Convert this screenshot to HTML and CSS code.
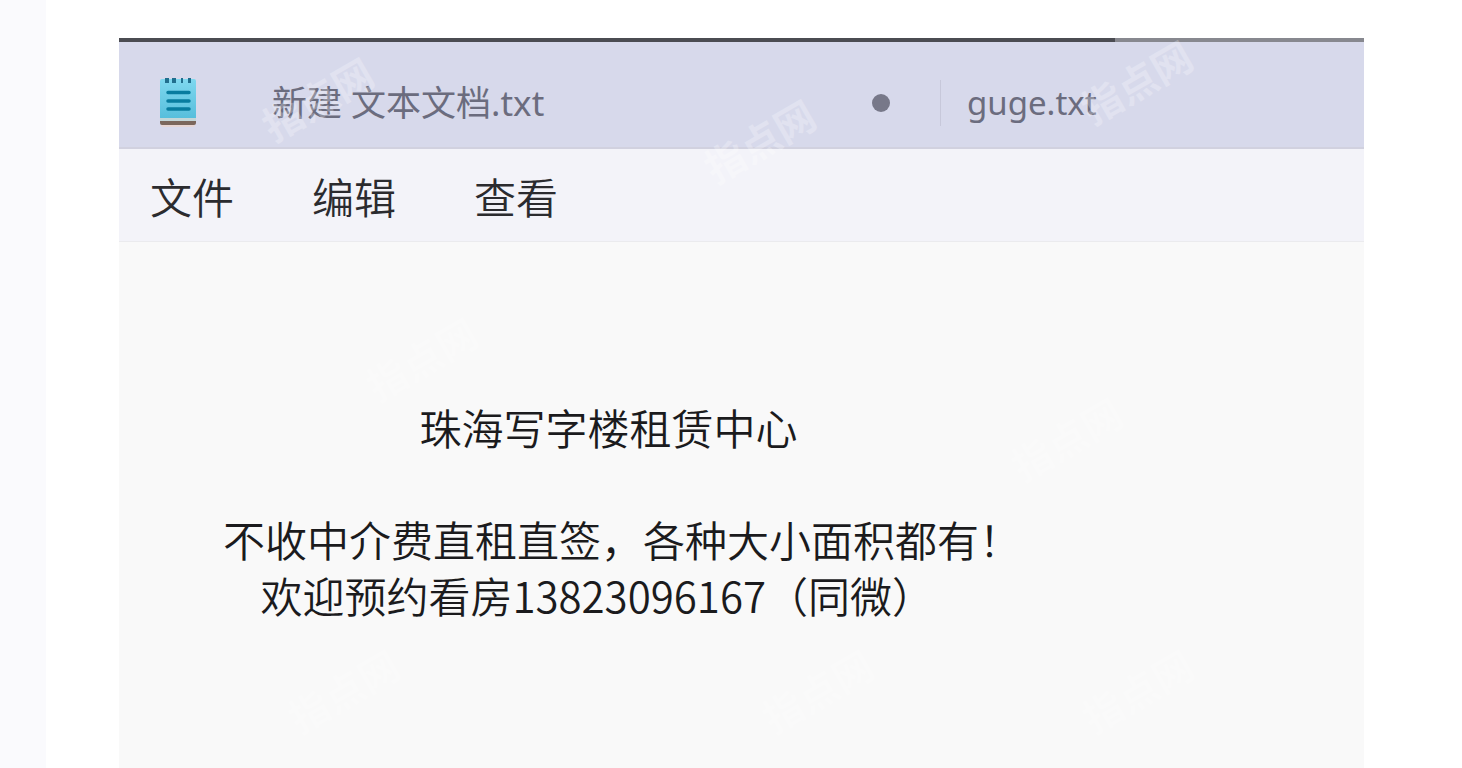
FILE: index.html
```
<!DOCTYPE html>
<html lang="zh-CN">
<head>
<meta charset="utf-8">
<title>新建 文本文档.txt</title>
<link rel="stylesheet" href="styles.css">
</head>
<body>
<div class="page">
  <aside class="rail"></aside>
  <main class="window">
    <div class="edge"></div>
    <header class="tabs">
      <svg class="app-icon" viewBox="0 0 36 50" aria-hidden="true">
        <defs>
          <linearGradient id="pad" x1="0" y1="0" x2="0" y2="1">
            <stop offset="0" stop-color="#7fd8ef"/>
            <stop offset="1" stop-color="#55bddb"/>
          </linearGradient>
        </defs>
        <rect x="1" y="43" width="34" height="6" rx="2" fill="#e6d5d3"/>
        <rect x="0" y="1" width="36" height="41" rx="2" fill="url(#pad)"/>
        <path d="M0 40h36v3H0z" fill="#c3d6d8"/>
        <path d="M0 43h36v2q0 2-2 2H2q-2 0-2-2z" fill="#7b675c"/>
        <path d="M5 0h4v5H5zM12 0h4v5h-4zM21 0h2v5h-2zM28 0h3v5h-3z" fill="#216f8e"/>
        <path d="M8 14.500h21M8 23h21M8 31h21" stroke="#087c9f" stroke-width="3.500" stroke-linecap="round"/>
      </svg>
      <button class="tab tab-first" type="button">
        <span>新建 文本文档.txt</span>
        <span class="dot"></span>
      </button>
      <button class="tab tab-second" type="button">guge.txt</button>
    </header>
    <nav class="menu">
      <button type="button">文件</button>
      <button type="button">编辑</button>
      <button type="button">查看</button>
    </nav>
    <textarea class="editor" aria-label="文本编辑器" spellcheck="false">


                             珠海写字楼租赁中心

        不收中介费直租直签，各种大小面积都有！
            欢迎预约看房13823096167（同微）</textarea>
    <div class="marks" aria-hidden="true">
      <span class="mark m1">指点网</span>
      <span class="mark m2">指点网</span>
      <span class="mark m3">指点网</span>
      <span class="mark faint m4">指点网</span>
      <span class="mark faint m5">指点网</span>
      <span class="mark faint m6">指点网</span>
      <span class="mark faint m7">指点网</span>
      <span class="mark faint m8">指点网</span>
    </div>
  </main>
</div>
</body>
</html>
```
FILE: styles.css
```
* { box-sizing: border-box; }

body {
  margin: 0;
  background: #fff;
  font-family: "Noto Sans CJK SC", sans-serif;
  font-weight: 350;
}

button, textarea {
  font: inherit;
  color: inherit;
  border: 0;
  background: none;
  padding: 0;
  margin: 0;
}

.page { display: flex; min-height: 100vh; }

.rail { flex: none; width: 46px; background: #fafafd; }

.window {
  position: relative;
  flex: 1;
  display: flex;
  flex-direction: column;
  margin: 38px 98px 0 73px;
}

.edge {
  height: 4px;
  background: linear-gradient(to right, #4b4c52 80%, #87888f 80%);
}

.tabs {
  display: flex;
  align-items: center;
  height: 107px;
  padding: 16px 24px 0 41px;
  background: #d7d9eb;
  border-bottom: 2px solid #d1d1df;
  color: #6b6c7e;
  font-family: "Noto Sans", "Noto Sans CJK SC", sans-serif;
  font-size: 35px;
  font-weight: 400;
}

.app-icon { flex: none; width: 36px; height: 50px; }

.tab {
  display: flex;
  align-items: center;
  height: 46px;
  line-height: 46px;
  white-space: nowrap;
}

.tab-first {
  flex: 0 1 745px;
  justify-content: space-between;
  padding: 0 50px 0 76px;
  border-right: 1px solid #c7c8da;
}

.tab-second { padding-left: 26px; font-size: 33px; }

.dot {
  width: 18px;
  height: 18px;
  border-radius: 50%;
  background: #777889;
}

.menu {
  display: flex;
  align-items: center;
  gap: 78px;
  height: 93px;
  padding: 2px 31px 0;
  background: #f3f3f9;
  border-bottom: 1px solid #ebebee;
  color: #2b2b2f;
  font-size: 42px;
}

.menu button { line-height: 56px; }

.editor {
  flex: 1;
  display: block;
  width: 100%;
  padding: 45px 0 0 29px;
  background: #f9f9f9;
  color: #1b1b1d;
  font-size: 42px;
  line-height: 56px;
  resize: none;
  outline: 0;
  overflow: hidden;
  white-space: pre;
}

.marks { position: absolute; inset: 0; pointer-events: none; }

.mark {
  position: absolute;
  color: rgba(255, 255, 255, 0.25);
  font-size: 40px;
  font-weight: 700;
  line-height: 40px;
  transform: rotate(-30deg);
}

.faint { color: rgba(255, 255, 255, 0.2); }

.m1 { left: 138px; top: 40px; }
.m2 { left: 580px; top: 82px; }
.m3 { left: 957px; top: 23px; }
.m4 { left: 242px; top: 300px; }
.m5 { left: 887px; top: 380px; }
.m6 { left: 164px; top: 632px; }
.m7 { left: 638px; top: 632px; }
.m8 { left: 958px; top: 632px; }
```
